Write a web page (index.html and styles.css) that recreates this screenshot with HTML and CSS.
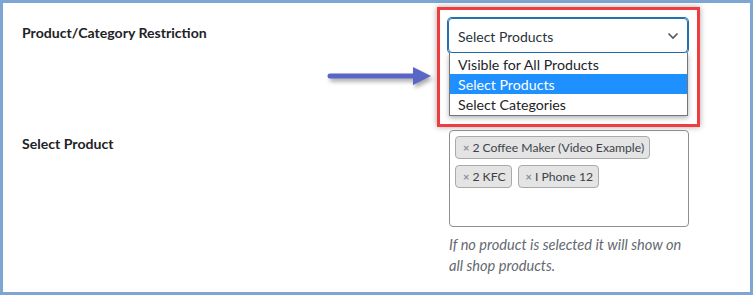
FILE: index.html
```html
<!DOCTYPE html>
<html lang="en">
<head>
  <meta charset="UTF-8">
  <meta name="viewport" content="width=device-width, initial-scale=1.0">
  <title>Product Restriction</title>
  <link rel="stylesheet" href="styles.css">
</head>
<body>

<div class="frame">
    <div class="setting-row row-restriction">
        <div class="setting-label">Product/Category Restriction</div>
        <div class="setting-field">
            <div class="highlight">
                <div class="select-box">
                    <span>Select Products</span>
                    <svg class="chevron" width="12" height="8" viewBox="0 0 12 8">
                        <path d="M1.5 1.5l4.5 4.5 4.5-4.5" fill="none" stroke="#50575e" stroke-width="1.6"/>
                    </svg>
                </div>
                <ul class="select-options">
                    <li>Visible for All Products</li>
                    <li class="active">Select Products</li>
                    <li>Select Categories</li>
                </ul>
            </div>
        </div>
    </div>

    <div class="setting-row row-products">
        <div class="setting-label">Select Product</div>
        <div class="setting-field">
            <div class="multi-select">
                <span class="tag"><span class="tag-remove">&times;</span>2 Coffee Maker (Video Example)</span>
                <span class="tag"><span class="tag-remove">&times;</span>2 KFC</span>
                <span class="tag"><span class="tag-remove">&times;</span>I Phone 12</span>
            </div>
            <p class="description">If no product is selected it will show on all shop products.</p>
        </div>
    </div>

    <!-- annotation arrow pointing at the dropdown -->
    <svg class="pointer-arrow" width="110" height="30" viewBox="0 0 110 30">
        <line x1="4" y1="14" x2="90" y2="14" stroke="#5a66c6" stroke-width="5" stroke-linecap="round"/>
        <polygon points="87,5 105,14 87,23" fill="#5a66c6"/>
    </svg>
</div>

</body>
</html>
```

FILE: styles.css
```css
/* Page frame */
body {
  margin: 0;
  font-family: Lato, "Open Sans", Arial, sans-serif;
  color: #1d2327;
  background-color: #fff;
}

.frame {
  position: relative;
  box-sizing: border-box;
  height: 295px;
  border: 3px solid #7ea6d2;
  padding: 4px 0 0 19px;
  background-color: #fff;
}

/* Settings rows */
.setting-row {
  display: grid;
  grid-template-columns: 426px 240px;
}

.setting-label {
  font-size: 14.1px;
  font-weight: 700;
  line-height: 20px;
}

.row-restriction .setting-label {
  padding-top: 16px;
}

.row-products {
  margin-top: 3px;
}

.row-products .setting-label {
  padding-top: 4px;
}

/* Red highlight round the dropdown */
.highlight {
  width: 240px;
  margin-left: -11px;
  border: 3px solid #f03c3f;
  padding: 8px 9px 8px 8px;
  box-shadow: 0 0 6px rgba(0, 0, 0, 0.35);
}

.select-box {
  display: flex;
  justify-content: space-between;
  align-items: center;
  box-sizing: border-box;
  height: 35px;
  padding: 2px 8px 0 9px;
  border: 1px solid #2271b1;
  border-radius: 4px;
  box-shadow: 0 0 0 1px #2271b1;
  font-size: 14px;
  color: #2c3338;
}

.chevron {
  margin-top: -2px;
}

.select-options {
  list-style: none;
  margin: 0 0 0 1px;
  padding: 1px 0 1px;
  border: 1px solid #767676;
  border-top: none;
  box-shadow: 0 2px 5px rgba(0, 0, 0, 0.3);
  font-size: 14.2px;
  background-color: #fff;
}

.select-options li {
  height: 20px;
  line-height: 21px;
  padding-left: 8px;
}

.select-options li.active {
  background-color: #1e90ff;
  color: #fff;
}

/* Product multi select */
.multi-select {
  display: flex;
  flex-wrap: wrap;
  align-content: flex-start;
  gap: 6px;
  box-sizing: border-box;
  width: 240px;
  height: 97px;
  margin-left: 1px;
  padding: 5px;
  border: 1px solid #8c8f94;
  border-radius: 4px;
}

.tag {
  box-sizing: border-box;
  height: 23px;
  line-height: 22px;
  padding: 0 5px 0 7px;
  border: 1px solid #aaa;
  border-radius: 4px;
  background-color: #e4e4e4;
  font-size: 12.2px;
  color: #3c434a;
}

.tag-remove {
  margin-right: 3px;
  color: #8c8f94;
  font-weight: 700;
  font-size: 11px;
}

.description {
  width: 240px;
  margin: 7px 0 0 1px;
  font-size: 14.6px;
  font-style: italic;
  line-height: 21px;
  color: #646970;
}

/* Annotation arrow */
.pointer-arrow {
  position: absolute;
  left: 323px;
  top: 59px;
  filter: drop-shadow(2px 3px 2px rgba(0, 0, 0, 0.35));
}
```
